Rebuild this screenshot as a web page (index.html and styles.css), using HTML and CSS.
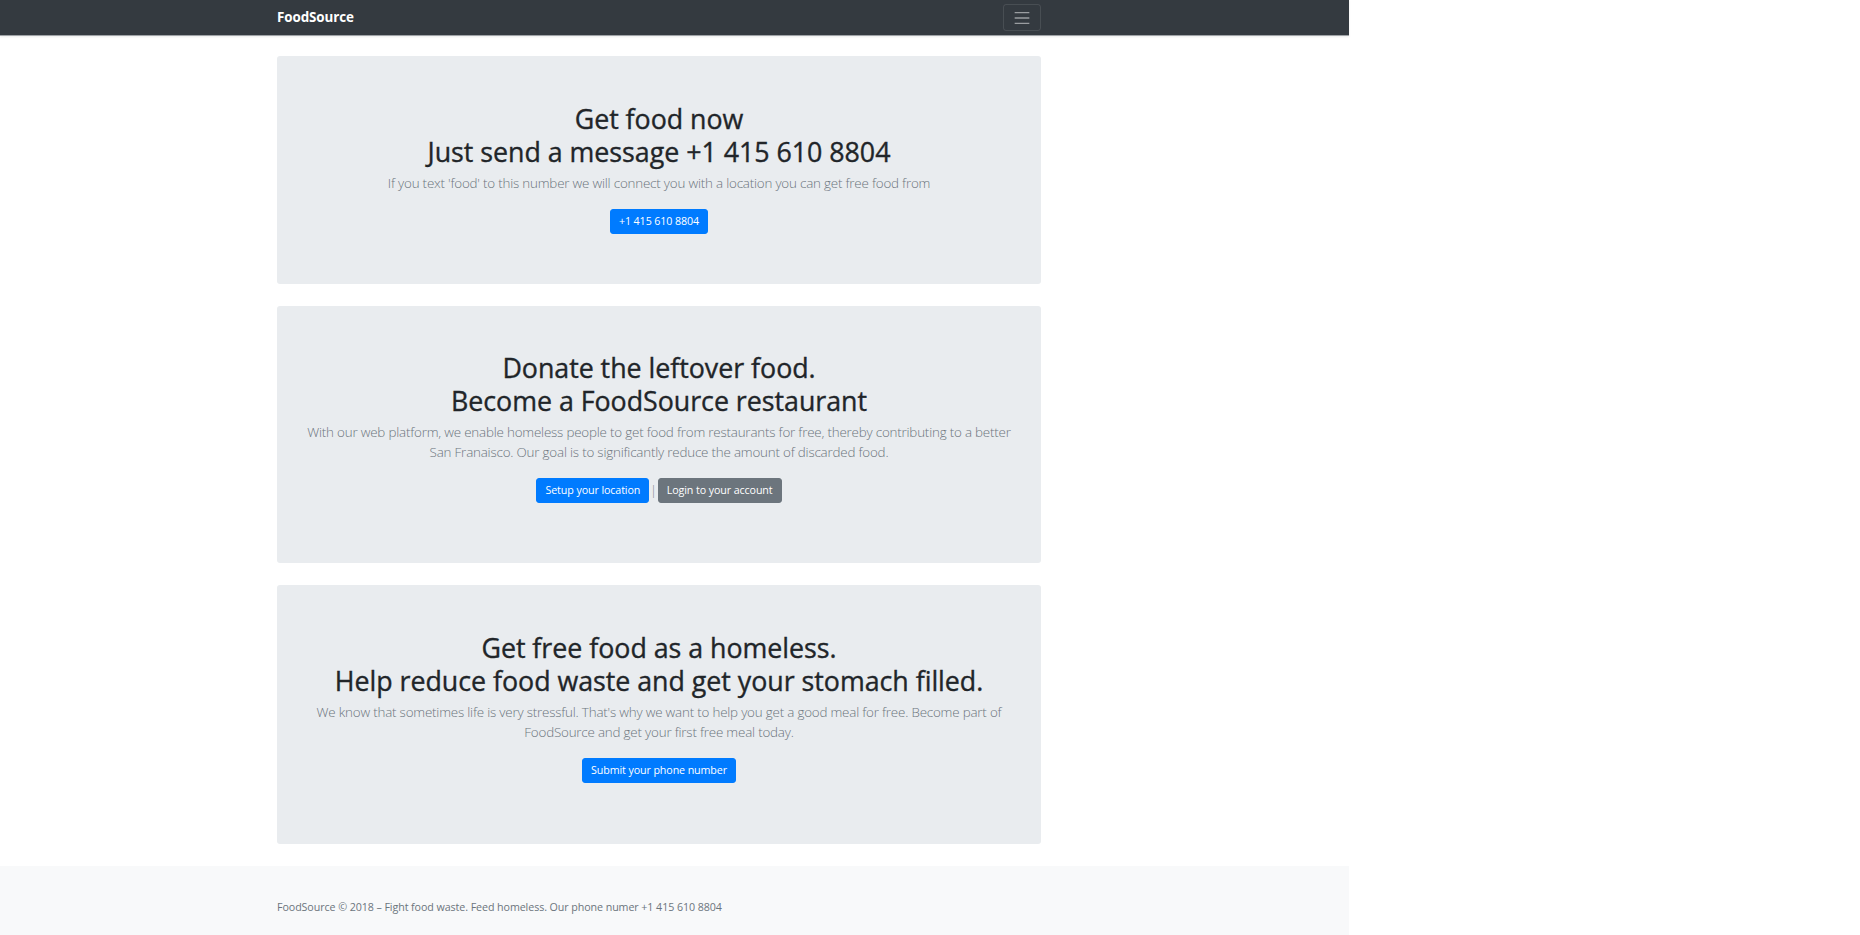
FILE: index.html
```html
<!DOCTYPE html>
<html lang="en">
<head>
<meta charset="utf-8">
<title>FoodSource</title>
<link rel="stylesheet" href="styles.css">
</head>
<body>
<div class="page">
  <nav class="navbar">
    <div class="navbar-inner">
      <a class="brand" href="#">FoodSource</a>
      <button class="toggler" type="button" aria-label="Toggle navigation">
        <svg width="20" height="20" viewBox="0 0 30 30" aria-hidden="true">
          <path d="M4 7h22M4 15h22M4 23h22" stroke="rgba(255,255,255,0.5)" stroke-width="2" stroke-linecap="butt" fill="none"/>
        </svg>
      </button>
    </div>
  </nav>

  <main class="container">
    <section class="jumbotron jumbotron-first">
      <h1 class="title">Get food now<br>Just send a message +1 415 610 8804</h1>
      <p class="lead">If you text 'food' to this number we will connect you with a location you can get free food from</p>
      <div class="actions">
        <a class="btn btn-primary" href="#">+1 415 610 8804</a>
      </div>
    </section>

    <section class="jumbotron">
      <h1 class="title">Donate the leftover food.<br>Become a FoodSource restaurant</h1>
      <p class="lead">With our web platform, we enable homeless people to get food from restaurants for free, thereby contributing to a better San Franaisco. Our goal is to significantly reduce the amount of discarded food.</p>
      <div class="actions">
        <a class="btn btn-primary" href="#">Setup your location</a>
        <span class="sep">|</span>
        <a class="btn btn-secondary" href="#">Login to your account</a>
      </div>
    </section>

    <section class="jumbotron jumbotron-last">
      <h1 class="title">Get free food as a homeless.<br>Help reduce food waste and get your stomach filled.</h1>
      <p class="lead">We know that sometimes life is very stressful. That's why we want to help you get a good meal for free. Become part of FoodSource and get your first free meal today.</p>
      <div class="actions">
        <a class="btn btn-primary" href="#">Submit your phone number</a>
      </div>
    </section>
  </main>

  <footer class="footer">
    <div class="footer-inner">
      <span class="footer-text">FoodSource © 2018 – Fight food waste. Feed homeless. Our phone numer +1 415 610 8804</span>
    </div>
  </footer>
</div>
</body>
</html>
```

FILE: styles.css
```css
* {
  box-sizing: border-box;
}

html, body {
  margin: 0;
  padding: 0;
  background: #ffffff;
}

body {
  font-family: "Open Sans", "Noto Sans", sans-serif;
  color: #212529;
  font-size: 10.7px;
  line-height: 1.5;
}

.page {
  width: 1349px;
}

/* Navbar */
.navbar {
  height: 36px;
  background: #343a40;
  border-bottom: 1px solid #9fa3a7;
  box-shadow: 0 1px 2px rgba(0, 0, 0, 0.08);
}

.navbar-inner {
  width: 764px;
  margin-left: 277px;
  height: 35px;
  display: flex;
  align-items: center;
  justify-content: space-between;
}

.brand {
  color: #ffffff;
  font-weight: 700;
  font-size: 13.4px;
  letter-spacing: -0.1px;
  text-decoration: none;
  line-height: 1;
}

.toggler {
  width: 38px;
  height: 27px;
  padding: 0;
  background: transparent;
  border: 1px solid rgba(255, 255, 255, 0.1);
  border-radius: 3px;
  display: flex;
  align-items: center;
  justify-content: center;
}

.toggler svg {
  display: block;
}

/* Content */
.container {
  width: 764px;
  margin-left: 277px;
  padding-top: 20px;
}

.jumbotron {
  background: #e9ecef;
  border-radius: 3px;
  padding: 45.5px 21px 60.2px;
  margin-bottom: 22px;
  text-align: center;
}

.jumbotron-first {
  padding-bottom: 50px;
}

.jumbotron-last {
  padding-bottom: 61px;
  margin-bottom: 21.5px;
}

.title {
  margin: 0 0 5px;
  font-size: 26.8px;
  line-height: 33px;
  font-weight: 400;
  letter-spacing: -0.03px;
  -webkit-text-stroke: 0.35px #212529;
  color: #212529;
}

.lead {
  margin: 0 0 16px;
  font-size: 13.4px;
  line-height: 20.1px;
  font-weight: 300;
  letter-spacing: -0.2px;
  color: #6c757d;
}

.actions {
  display: flex;
  justify-content: center;
  align-items: center;
}

.sep {
  color: #6c757d;
  font-size: 12px;
  font-weight: 300;
  padding: 0 1px;
}

.btn {
  display: inline-block;
  height: 25px;
  padding: 0 8px;
  font-size: 10.7px;
  line-height: 23px;
  font-weight: 400;
  letter-spacing: -0.1px;
  color: #ffffff;
  text-decoration: none;
  border: 1px solid transparent;
  border-radius: 3px;
}

.btn-primary {
  background: #007bff;
  border-color: #007bff;
}

.btn-secondary {
  background: #6c757d;
  border-color: #6c757d;
}

/* Footer */
.footer {
  background: #f8f9fa;
  height: 84px;
  padding-top: 33.5px;
}

.footer-inner {
  width: 764px;
  margin-left: 277px;
}

.footer-text {
  font-size: 10.7px;
  line-height: 16px;
  color: #6c757d;
  letter-spacing: -0.08px;
}
```
